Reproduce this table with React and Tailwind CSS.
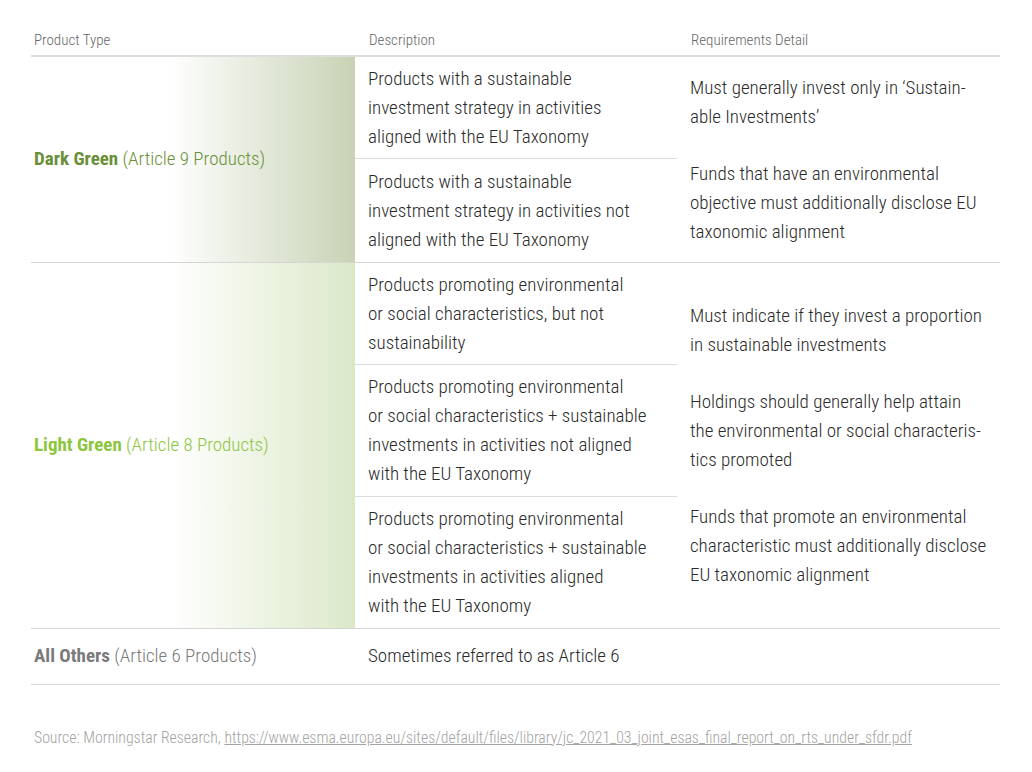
const font = 'font-["Roboto_Condensed","Liberation_Sans",sans-serif]'

function SubCell({ children, h, last }) {
  return (
    <div className={`flex flex-col justify-center pl-[13px] pr-4 leading-[29px] ${h} ${last ? '' : 'border-b border-[#dcdcdc]'}`}>
      <p>{children}</p>
    </div>
  )
}

function Group({ label, note, labelColor, gradient, items, details }) {
  return (
    <div className="flex border-b border-[#d6d6d6]">
      <div className={`flex w-[324px] shrink-0 items-center pl-[3px] ${gradient}`}>
        <span className={`text-[19px] ${labelColor}`}>
          <span className="font-bold">{label}</span> <span className="font-light">{note}</span>
        </span>
      </div>
      <div className="flex w-[322px] shrink-0 flex-col bg-white">
        {items.map((item, i) => (
          <SubCell key={i} h={item.h} last={i === items.length - 1}>{item.text}</SubCell>
        ))}
      </div>
      <div className="flex flex-1 flex-col justify-center gap-[28px] whitespace-nowrap pl-[13px] leading-[29px]">
        {details.map((d, i) => (
          <p key={i}>{d}</p>
        ))}
      </div>
    </div>
  )
}

export default function App() {
  return (
    <div className={`min-h-[772px] w-[1032px] bg-white pt-[29px] font-light text-[#2a2a2a] ${font}`}>
      <div className="ml-[31px] w-[969px] text-[19px]">
        <div className="flex border-b-2 border-[#dedede] pb-[3px] text-[15px] font-light text-[#666]">
          <div className="w-[324px] pl-[3px]">Product Type</div>
          <div className="w-[322px] pl-[14px]">Description</div>
          <div className="flex-1 pl-[14px]">Requirements Detail</div>
        </div>

        <Group
          label="Dark Green"
          note="(Article 9 Products)"
          labelColor="text-[#6a8f38]"
          gradient="bg-linear-to-r from-white from-[43%] to-[#c8d3b5]"
          items={[
            { h: 'h-[102px]', text: <>Products with a sustainable<br />investment strategy in activities<br />aligned with the EU Taxonomy</> },
            { h: 'h-[103px]', text: <>Products with a sustainable<br />investment strategy in activities not<br />aligned with the EU Taxonomy</> },
          ]}
          details={[
            <>Must generally invest only in ‘Sustain-<br />able Investments’</>,
            <>Funds that have an environmental<br />objective must additionally disclose EU<br />taxonomic alignment</>,
          ]}
        />

        <Group
          label="Light Green"
          note="(Article 8 Products)"
          labelColor="text-[#8cc63e]"
          gradient="bg-linear-to-r from-white from-[43%] to-[#dbe8c8]"
          items={[
            { h: 'h-[102px]', text: <>Products promoting environmental<br />or social characteristics, but not<br />sustainability</> },
            { h: 'h-[132px]', text: <>Products promoting environmental<br />or social characteristics + sustainable<br />investments in activities not aligned<br />with the EU Taxonomy</> },
            { h: 'h-[131px]', text: <>Products promoting environmental<br />or social characteristics + sustainable<br />investments in activities aligned<br />with the EU Taxonomy</> },
          ]}
          details={[
            <>Must indicate if they invest a proportion<br />in sustainable investments</>,
            <>Holdings should generally help attain<br />the environmental or social characteris-<br />tics promoted</>,
            <>Funds that promote an environmental<br />characteristic must additionally disclose<br />EU taxonomic alignment</>,
          ]}
        />

        <div className="flex h-[56px] items-center border-b border-[#d6d6d6]">
          <div className="w-[324px] pl-[3px] text-[#7a7a7a]">
            <span className="font-bold">All Others</span> <span className="font-light">(Article 6 Products)</span>
          </div>
          <div className="pl-[13px]">Sometimes referred to as Article 6</div>
        </div>
      </div>

      <p className="ml-[34px] mt-[41px] text-[15.75px] font-light text-[#a3a3a3]">
        Source: Morningstar Research,{' '}
        <a className="underline" href="#">https://www.esma.europa.eu/sites/default/files/library/jc_2021_03_joint_esas_final_report_on_rts_under_sfdr.pdf</a>
      </p>
    </div>
  )
}
